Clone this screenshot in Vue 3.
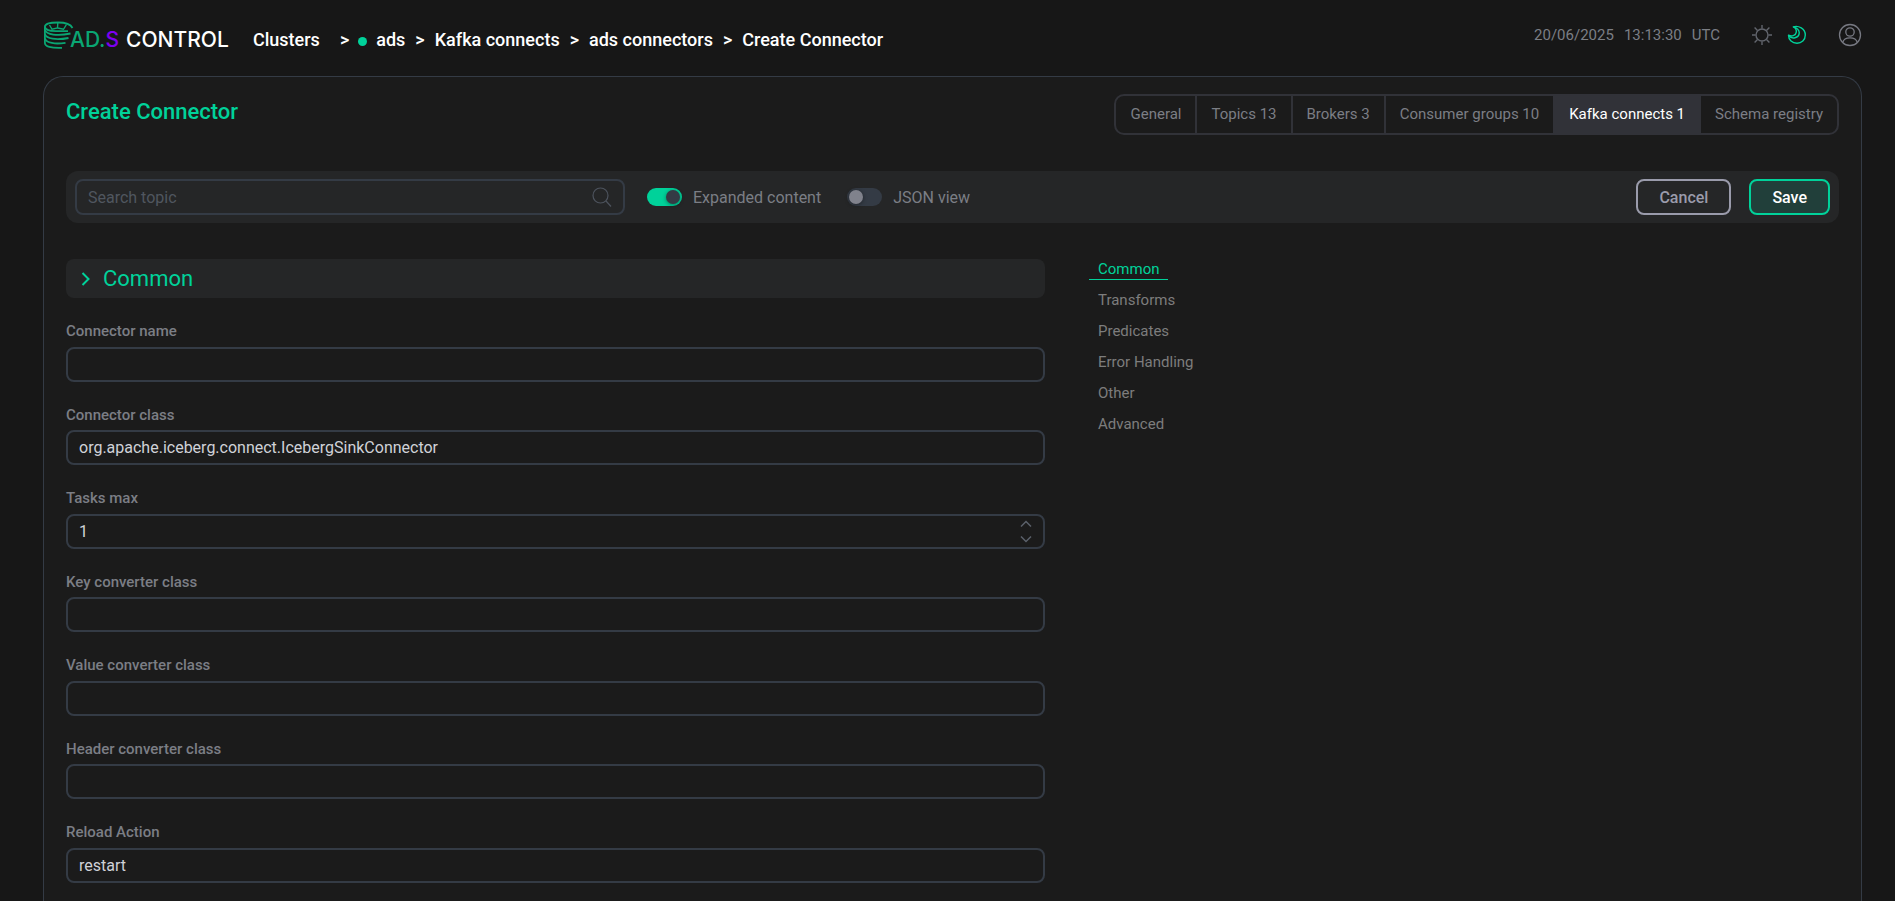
<script setup>
import { ref, reactive } from 'vue'

const crumbs = ['Kafka connects', 'ads connectors', 'Create Connector']
const tabs = ['General', 'Topics 13', 'Brokers 3', 'Consumer groups 10', 'Kafka connects 1', 'Schema registry']
const activeTab = ref('Kafka connects 1')
const sections = ['Common', 'Transforms', 'Predicates', 'Error Handling', 'Other', 'Advanced']
const activeSection = ref('Common')
const search = ref('')
const expanded = ref(true)
const jsonView = ref(false)

const fields = reactive([
  { id: 'name', label: 'Connector name', value: '' },
  { id: 'class', label: 'Connector class', value: 'org.apache.iceberg.connect.IcebergSinkConnector' },
  { id: 'tasks', label: 'Tasks max', value: 1, number: true },
  { id: 'key-converter', label: 'Key converter class', value: '' },
  { id: 'value-converter', label: 'Value converter class', value: '' },
  { id: 'header-converter', label: 'Header converter class', value: '' },
  { id: 'reload', label: 'Reload Action', value: 'restart' },
])
</script>

<template>
  <div class="page">
    <header class="top">
      <a href="#" class="logo" aria-label="AD.S Control">
        <svg class="logo-mark" width="32" height="28" viewBox="0 0 32 28" fill="none" stroke="#0aa673" stroke-width="1.800">
          <path d="M29.500 7C27.500 3 21.500 1.500 15 1.500C7 1.500 1.900 3.200 1.900 5.800C1.900 8.600 7 10.200 13 10.200H25" />
          <path d="M1.900 5.800V22C1.900 25.500 8 27.200 19 26.800" />
          <path d="M6.500 4L9 8.300L14.500 7L14.800 2M14.500 7L20.500 8.300L23.500 3.500" stroke-width="1.400" />
          <path d="M1.900 9C3.500 13.500 14 15.500 27.500 12.500" />
          <path d="M1.900 13C3.500 17.800 13 19.500 25.500 17" />
          <path d="M1.900 17.500C3.500 22 12 23.500 22.500 21.800" />
        </svg>
        <span class="logo-ad">AD.</span><span class="logo-s">S</span><span class="logo-control">CONTROL</span>
      </a>
      <nav class="crumbs" aria-label="Breadcrumb">
        <a href="#" class="crumb-root">Clusters</a>
        <span>&gt;</span>
        <span class="dot"></span>
        <a href="#">ads</a>
        <template v-for="c in crumbs" :key="c">
          <span>&gt;</span>
          <a href="#">{{ c }}</a>
        </template>
      </nav>
      <div class="tools">
        <time class="clock"><span>20/06/2025</span><span>13:13:30</span><span>UTC</span></time>
        <button class="icon-btn sun" aria-label="Light theme">
          <svg width="20" height="20" viewBox="0 0 20 20" fill="none" stroke="#62656d" stroke-width="1.400">
            <circle cx="10" cy="10" r="6" />
            <path d="M10 0V3.500M10 16.500V20M0 10H3.500M16.500 10H20M2.600 2.600L5.500 5.500M14.500 14.500L17.400 17.400M2.600 17.400L5.500 14.500M14.500 5.500L17.400 2.600" />
          </svg>
        </button>
        <button class="icon-btn moon" aria-label="Dark theme">
          <svg width="20" height="20" viewBox="0 0 20 20" fill="none" stroke="#00d29a" stroke-width="1.400" stroke-linejoin="round">
            <path d="M6.300 1.800C11.500 .2 18.300 3.500 18.300 10C18.300 15 14.500 18.300 10 18.300C5.300 18.300 1.500 15 1.500 10.200C3 12.500 5.500 13.300 8 12.700C13.500 11.300 14.300 4 6.300 1.800Z" />
            <path d="M1.500 10.200C4.500 12 8.800 10.700 9.300 7.200C9.600 5 8.500 2.800 6.300 1.800" />
          </svg>
        </button>
        <button class="icon-btn user" aria-label="Account">
          <svg width="24" height="24" viewBox="0 0 24 24" fill="none" stroke="#777982" stroke-width="1.300">
            <circle cx="12" cy="12" r="10.500" />
            <circle cx="12" cy="9" r="4.200" />
            <path d="M4.700 19.500C5.500 16.200 8.500 14.800 12 14.800C15.500 14.800 18.500 16.200 19.300 19.500" />
          </svg>
        </button>
      </div>
    </header>

    <main class="panel">
      <div class="panel-head">
        <h1>Create Connector</h1>
        <nav class="tabs" aria-label="Cluster">
          <a v-for="t in tabs" :key="t" href="#" :class="{ active: t === activeTab }" @click.prevent="activeTab = t">{{ t }}</a>
        </nav>
      </div>

      <div class="toolbar">
        <div class="search">
          <input v-model="search" type="text" placeholder="Search topic" aria-label="Search topic" />
          <svg width="20" height="20" viewBox="0 0 20 20" fill="none" stroke="#4d535d" stroke-width="1.200">
            <circle cx="8.500" cy="8.500" r="7.500" />
            <path d="M14 14L19 19.500" />
          </svg>
        </div>
        <label class="switch"><input v-model="expanded" type="checkbox" />Expanded content</label>
        <label class="switch"><input v-model="jsonView" type="checkbox" />JSON view</label>
        <div class="actions">
          <button class="btn cancel">Cancel</button>
          <button class="btn save">Save</button>
        </div>
      </div>

      <div class="body">
        <form class="form" @submit.prevent>
          <h2 class="section">
            <svg width="10" height="14" viewBox="0 0 10 14" fill="none" stroke="#00d29a" stroke-width="2">
              <path d="M1.500 1L7.500 7L1.500 13" />
            </svg>
            Common
          </h2>
          <div v-for="f in fields" :key="f.id" class="field">
            <label :for="f.id">{{ f.label }}</label>
            <div class="box">
              <input :id="f.id" v-model="f.value" :type="f.number ? 'number' : 'text'" />
              <div v-if="f.number" class="stepper">
                <button type="button" aria-label="Increase" @click="f.value++">
                  <svg width="12" height="8" viewBox="0 0 12 8" fill="none" stroke="#5b616b" stroke-width="1.500"><path d="M1 6.500L6 1.500L11 6.500" /></svg>
                </button>
                <button type="button" aria-label="Decrease" @click="f.value--">
                  <svg width="12" height="8" viewBox="0 0 12 8" fill="none" stroke="#5b616b" stroke-width="1.500"><path d="M1 1.500L6 6.500L11 1.500" /></svg>
                </button>
              </div>
            </div>
          </div>
        </form>
        <nav class="anchors" aria-label="Sections">
          <a v-for="s in sections" :key="s" href="#" :class="{ active: s === activeSection }" @click.prevent="activeSection = s">{{ s }}</a>
        </nav>
      </div>
    </main>
  </div>
</template>

<style>
body {
  background: #171717;
}
</style>

<style scoped>
* {
  box-sizing: border-box;
}
.page {
  display: flex;
  flex-direction: column;
  min-height: 100vh;
  padding: 0 33px 0 43px;
  background: #171717;
  font-family: Roboto, 'Liberation Sans', sans-serif;
  font-size: 16px;
  color: #7b7e85;
}
a {
  color: inherit;
  text-decoration: none;
}
button {
  font: inherit;
  cursor: pointer;
}
.top {
  display: flex;
  align-items: flex-start;
  height: 76px;
}
.logo {
  display: flex;
  align-items: flex-start;
  width: 210px;
  padding-top: 21px;
  font-family: Inter, sans-serif;
  font-size: 21px;
  font-weight: 500;
  line-height: 38px;
  white-space: nowrap;
}
.logo-mark {
  flex: none;
  margin-right: -5px;
}
.logo-ad {
  color: #0aa673;
}
.logo-s {
  color: #7d00f0;
}
.logo-control {
  margin-left: 7px;
  color: #fff;
}
.crumbs {
  display: flex;
  align-items: center;
  gap: 10px;
  padding-top: 28px;
  color: #fff;
  font-size: 18px;
  font-weight: 500;
  line-height: 24px;
  white-space: nowrap;
}
.crumb-root {
  margin-right: 10px;
}
.dot {
  width: 9px;
  height: 9px;
  margin: 3px -1px 0;
  border-radius: 50%;
  background: #00d29a;
}
.tools {
  display: flex;
  align-items: center;
  margin-left: auto;
  padding-top: 23px;
}
.clock {
  display: flex;
  gap: 10px;
  font-size: 15px;
  line-height: 24px;
}
.icon-btn {
  display: flex;
  padding: 0;
  border: 0;
  background: none;
}
.sun {
  margin-left: 32px;
}
.moon {
  margin-left: 15px;
}
.user {
  margin-left: 31px;
}
.panel {
  flex: 1;
  padding: 17px 22px 18px;
  border: 1px solid #343b45;
  border-bottom: 0;
  border-radius: 20px 20px 0 0;
  background: #1b1b1b;
}
.panel-head {
  display: flex;
  justify-content: space-between;
  align-items: flex-start;
}
h1 {
  margin: 0;
  color: #00d29a;
  font-size: 22px;
  font-weight: 500;
  line-height: 36px;
}
.tabs {
  display: flex;
  height: 41px;
  border: 2px solid #313238;
  border-radius: 10px;
  overflow: hidden;
  font-size: 15px;
  line-height: 36px;
  white-space: nowrap;
}
.tabs a {
  padding: 0 14px;
}
.tabs a + a {
  border-left: 2px solid #313238;
}
.tabs .active {
  background: #313238;
  color: #fff;
}
.toolbar {
  display: flex;
  align-items: center;
  height: 52px;
  margin-top: 36px;
  padding: 0 9px;
  border-radius: 12px;
  background: #252627;
}
.search {
  display: flex;
  align-items: center;
  width: 550px;
  height: 36px;
  padding: 0 11px;
  border: 2px solid #343b45;
  border-radius: 8px;
}
.search input {
  flex: 1;
  min-width: 0;
  padding: 0;
  border: 0;
  outline: 0;
  background: none;
  color: #d4d6da;
  font: inherit;
}
.search input::placeholder {
  color: #50565f;
  opacity: 1;
}
.switch {
  display: flex;
  align-items: center;
  gap: 11px;
  margin-left: 22px;
  white-space: nowrap;
}
.switch + .switch {
  margin-left: 26px;
}
.switch input {
  appearance: none;
  display: flex;
  width: 35px;
  height: 18px;
  margin: 0;
  padding: 2px;
  border-radius: 9px;
  background: #343b45;
}
.switch input::before {
  content: '';
  width: 14px;
  height: 14px;
  border-radius: 50%;
  background: #80828c;
  box-shadow: 0 1px 4px rgba(0, 0, 0, 0.4);
}
.switch input:checked {
  justify-content: flex-end;
  background: #00d29a;
}
.switch input:checked::before {
  background: #343b45;
}
.actions {
  display: flex;
  gap: 18px;
  margin-left: auto;
}
.btn {
  height: 36px;
  padding: 0 21px;
  border: 2px solid;
  border-radius: 8px;
  font-weight: 500;
}
.cancel {
  border-color: #9a9bab;
  background: none;
  color: #9a9bab;
}
.save {
  border-color: #00d29a;
  background: #213f3a;
  color: #fff;
}
.body {
  display: grid;
  grid-template-columns: 979fr 794fr;
  margin-top: 36px;
}
.section {
  display: flex;
  align-items: center;
  gap: 12px;
  height: 39px;
  margin: 0 0 24px;
  padding: 0 15px;
  border-radius: 8px;
  background: #252627;
  color: #00d29a;
  font-size: 22px;
  font-weight: 400;
}
.field + .field {
  margin-top: 24px;
}
.field label {
  display: block;
  margin-bottom: 5px;
  font-size: 15px;
  font-weight: 500;
  line-height: 1.3;
}
.box {
  display: flex;
  height: 35px;
  border: 2px solid #343b45;
  border-radius: 8px;
}
.box input {
  flex: 1;
  min-width: 0;
  padding: 0 11px;
  border: 0;
  outline: 0;
  background: none;
  color: #d0d2d8;
  font: inherit;
  appearance: textfield;
}
.box input::-webkit-inner-spin-button {
  appearance: none;
  margin: 0;
}
.stepper {
  display: flex;
  flex-direction: column;
  justify-content: space-between;
  padding: 4px 11px;
}
.stepper button {
  display: flex;
  padding: 0;
  border: 0;
  background: none;
}
.anchors {
  display: flex;
  flex-direction: column;
  align-items: flex-start;
  gap: 11px;
  padding-left: 44px;
  color: #7d7d7d;
  font-size: 15px;
  line-height: 20px;
}
.anchors a {
  padding: 0 9px;
}
.anchors .active {
  margin-bottom: -1px;
  border-bottom: 1px solid #00d29a;
  color: #00d29a;
}
</style>
